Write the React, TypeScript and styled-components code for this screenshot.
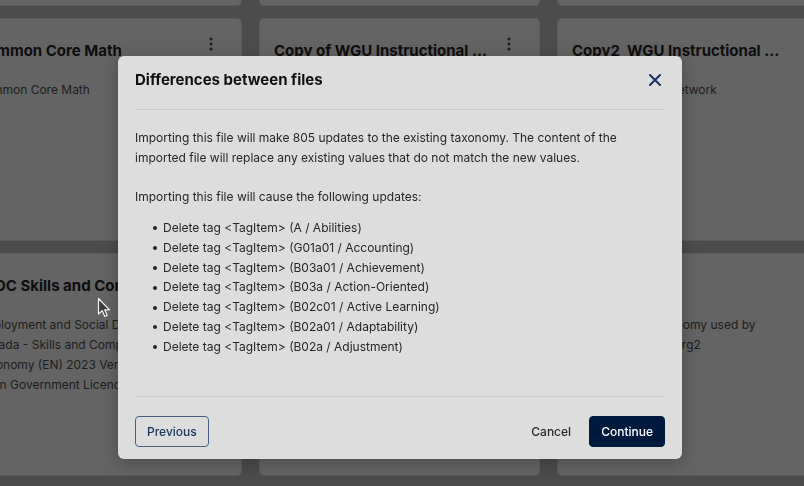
import React from "react";
import styled, {createGlobalStyle} from "styled-components";

const GlobalStyle = createGlobalStyle`
  html, body {
    margin: 0;
    padding: 0;
    background: #4c4c4c;
    font-family: Inter, "Noto Sans", "Liberation Sans", sans-serif;
    overflow: hidden;
  }
  * { box-sizing: border-box; }
`;

//--------Background page--------------------------------
const Page = styled.div`
  width: 804px;
  height: 486px;
  overflow: hidden;
`;
const CardGrid = styled.div`
  display: grid;
  grid-template-columns: repeat(3, 281px);
  grid-auto-rows: 223px;
  gap: 12px 17px;
  margin: -217px 0 0 -39px;
`;
const Card = styled.div`
  background: #646464;
  border: 1px solid #5b5b5b;
  border-radius: 5px;
  padding: 22px 22px 0 14px;
  display: flex;
  flex-direction: column;
`;
const CardHead = styled.div`
  display: flex;
  align-items: flex-start;
`;
const CardTitle = styled.h3`
  flex: 1;
  min-width: 0;
  margin: 0;
  font-size: 15px;
  line-height: 20px;
  font-weight: 700;
  color: #0e0e0e;
  white-space: nowrap;
  overflow: hidden;
  text-overflow: ellipsis;
`;
const Kebab = styled.span`
  flex: none;
  width: 16px;
  height: 16px;
  margin: -5px 0 0 12px;
  color: #16202c;
  display: flex;
`;
const CardText = styled.p`
  margin: 19px 0 0;
  font-size: 12px;
  line-height: 20px;
  color: #1d1d1d;
  white-space: pre-line;
`;

//--------Modal--------------------------------
const Overlay = styled.div`
  position: fixed;
  inset: 0;
  display: flex;
  justify-content: center;
  align-items: flex-start;
  padding: 56px 4px 0 0;
`;
const Dialog = styled.div`
  width: 564px;
  background: #dddddd;
  border-radius: 6px;
  box-shadow: 0 4px 18px rgba(0, 0, 0, 0.25);
  padding: 0 17px 12px;
`;
const Header = styled.div`
  display: flex;
  align-items: center;
  justify-content: space-between;
  padding: 14px 0 19px;
  border-bottom: 1px solid #cbcbcb;
`;
const Heading = styled.h2`
  margin: 0;
  font-size: 15px;
  line-height: 20px;
  font-weight: 700;
  color: #111111;
`;
const CloseButton = styled.button`
  border: 0;
  background: none;
  padding: 0;
  margin-right: 4px;
  width: 12px;
  height: 12px;
  display: flex;
  color: #17355a;
  cursor: pointer;
`;
const Body = styled.div`
  padding: 18px 0 39px;
  border-bottom: 1px solid #cbcbcb;
  font-size: 12px;
  color: #262626;
`;
const Paragraph = styled.p`
  margin: 0 0 19px;
  line-height: 20px;
  &:last-of-type { margin: 0; }
`;
const UpdateList = styled.ul`
  margin: 11px 0 0;
  padding: 0;
  list-style: none;
  li {
    display: flex;
    align-items: center;
    line-height: 19.8px;
  }
  li::before {
    content: "";
    flex: none;
    width: 4px;
    height: 4px;
    border-radius: 50%;
    background: currentColor;
    margin: 1px 6px 0 18px;
  }
`;
const Footer = styled.div`
  display: flex;
  justify-content: space-between;
  align-items: center;
  padding-top: 19px;
`;
const Actions = styled.div`
  display: flex;
  gap: 6px;
`;
const Button = styled.button<{variant?: "outline" | "text" | "solid"}>`
  height: 31px;
  padding: 0 11px;
  border-radius: 4px;
  font-family: inherit;
  font-size: 12px;
  font-weight: 500;
  cursor: pointer;
  border: 1px solid ${p => p.variant === "outline" ? "#45607f" : p.variant === "solid" ? "#001a3e" : "transparent"};
  background: ${p => p.variant === "solid" ? "#001a3e" : "transparent"};
  color: ${p => p.variant === "solid" ? "#ffffff" : p.variant === "outline" ? "#17355a" : "#2a2a2a"};
`;
const Cursor = styled.svg`
  position: fixed;
  left: 97px;
  top: 297px;
`;

const cards = [
    {title: "Occupational Skills Library", text: "Occupational skills library"},
    {title: "Career Readiness Framework", text: "Career readiness"},
    {title: "Digital Literacy Skills", text: "Digital literacy"},
    {title: "Common Core Math", text: "Common Core Math"},
    {title: "Copy of WGU Instructional Design", text: "WGU Instructional Design Network"},
    {title: "Copy2_WGU Instructional Design", text: "WGU Instruction Network"},
    {
        title: "ESDC Skills and Competencies Taxonomy",
        text: "Employment and Social Development\nCanada - Skills and Competencies\nTaxonomy (EN) 2023 Version under\nOpen Government Licence - Canada",
    },
    {title: "Open Skills Network", text: "Open Skills Network shared taxonomy"},
    {title: "Test Skills", text: "Copy of skills taxonomy used by\nmembers of a testorg2"},
];

const updates = [
    "A / Abilities",
    "G01a01 / Accounting",
    "B03a01 / Achievement",
    "B03a / Action-Oriented",
    "B02c01 / Active Learning",
    "B02a01 / Adaptability",
    "B02a / Adjustment",
];

const App = () => {
    return (
        <>
            <GlobalStyle/>
            <Page>
                <CardGrid>
                    {cards.map((card, i) =>
                        <Card key={i}>
                            <CardHead>
                                <CardTitle>{card.title}</CardTitle>
                                <Kebab>
                                    <svg width="16" height="16" viewBox="0 0 16 16">
                                        <circle cx="8" cy="3" r="1.5" fill="currentColor"/>
                                        <circle cx="8" cy="8" r="1.5" fill="currentColor"/>
                                        <circle cx="8" cy="13" r="1.5" fill="currentColor"/>
                                    </svg>
                                </Kebab>
                            </CardHead>
                            <CardText>{card.text}</CardText>
                        </Card>
                    )}
                </CardGrid>
            </Page>
            <Overlay>
                <Dialog>
                    <Header>
                        <Heading>Differences between files</Heading>
                        <CloseButton aria-label="Close">
                            <svg width="12" height="12" viewBox="0 0 12 12">
                                <path d="M1 1 L11 11 M11 1 L1 11" stroke="currentColor" strokeWidth="2" strokeLinecap="round"/>
                            </svg>
                        </CloseButton>
                    </Header>
                    <Body>
                        <Paragraph>
                            Importing this file will make 805 updates to the existing taxonomy. The content of the
                            imported file will replace any existing values that do not match the new values.
                        </Paragraph>
                        <Paragraph>Importing this file will cause the following updates:</Paragraph>
                        <UpdateList>
                            {updates.map(u => <li key={u}>Delete tag &lt;TagItem&gt; ({u})</li>)}
                        </UpdateList>
                    </Body>
                    <Footer>
                        <Button variant="outline">Previous</Button>
                        <Actions>
                            <Button variant="text">Cancel</Button>
                            <Button variant="solid">Continue</Button>
                        </Actions>
                    </Footer>
                </Dialog>
            </Overlay>
            <Cursor width="14" height="21" viewBox="0 0 14 21">
                <path d="M1.5 1.5 L1.5 17 L5.2 13.6 L7.8 19.5 L10.2 18.5 L7.7 12.8 L12.5 12.8 Z"
                      fill="#3c3c3c" stroke="#f2f2f2" strokeWidth="1.2" strokeLinejoin="round"/>
            </Cursor>
        </>
    );
};
export default App;
